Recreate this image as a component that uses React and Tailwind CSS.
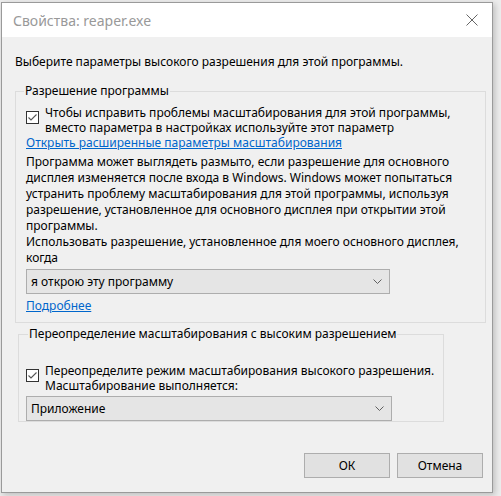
import React from "react";

const Check = () => (
  <svg width="13" height="13" viewBox="0 0 13 13" className="shrink-0 mt-[6px]">
    <rect x="0.5" y="0.5" width="12" height="12" fill="#fff" stroke="#333" />
    <polyline points="2.5,6.5 5,9 10.5,3.5" fill="none" stroke="#555" strokeWidth="1.1" />
  </svg>
);

const Combo = ({ value, width }) => (
  <div
    className={`flex items-center justify-between h-[25px] border border-[#adadad] bg-[#e5e5e5] pl-[4px] pr-[7px] ${width}`}
  >
    <span>{value}</span>
    <svg width="9" height="5" viewBox="0 0 9 5">
      <polyline points="0.5,0.5 4.5,4.5 8.5,0.5" fill="none" stroke="#606060" />
    </svg>
  </div>
);

const Button = ({ children }) => (
  <button className="w-[86px] h-[25px] border border-[#adadad] bg-[#e1e1e1] text-black">
    {children}
  </button>
);

export default function App() {
  return (
    <div
      className="w-[501px] h-[496px] bg-[#ececec] pt-[2px] pl-[1px] overflow-hidden text-[12px] leading-[16px] text-black"
      style={{ fontFamily: '"Noto Sans", "Open Sans", sans-serif' }}
    >
      <div className="w-[492px] h-[491px] border border-[#9a9a9a] flex flex-col bg-[#f0f0f0] shadow-[2px_2px_6px_rgba(0,0,0,0.2)]">
        <div className="h-[34px] bg-white flex items-center justify-between pl-[11px] pr-[14px]">
          <span className="text-[14px] text-[#999] mt-[2px]">Свойства: reaper.exe</span>
          <svg width="12" height="12" viewBox="0 0 12 12">
            <path d="M0.5 0.5 L11.5 11.5 M11.5 0.5 L0.5 11.5" stroke="#666" strokeWidth="1" />
          </svg>
        </div>

        <div className="flex-1 flex flex-col pl-[13px] pr-[7px]">
          <p className="mt-[17px] mb-[13px] whitespace-nowrap">
            Выберите параметры высокого разрешения для этой программы.
          </p>

          <fieldset className="w-[471px] border border-[#dcdcdc] pl-[10px] pr-[8px] pt-[6px] pb-[8px]">
            <legend className="ml-[-2px] px-[1px]">Разрешение программы</legend>
            <div className="flex gap-[6px]">
              <Check />
              <p className="leading-[15px] whitespace-nowrap">
                Чтобы исправить проблемы масштабирования для этой программы,
                <br />
                вместо параметра в настройках используйте этот параметр
              </p>
            </div>
            <a href="#" className="block text-[#0066cc] underline w-fit whitespace-nowrap">
              Открыть расширенные параметры масштабирования
            </a>
            <p className="mt-[3px] whitespace-nowrap">
              Программа может выглядеть размыто, если разрешение для основного
              <br />
              дисплея изменяется после входа в Windows. Windows может попытаться
              <br />
              устранить проблему масштабирования для этой программы, используя
              <br />
              разрешение, установленное для основного дисплея при открытии этой
              <br />
              программы.
              <br />
              Использовать разрешение, установленное для моего основного дисплея,
              <br />
              когда
            </p>
            <div className="mt-[3px]">
              <Combo value="я открою эту программу" width="w-[364px]" />
            </div>
            <a href="#" className="block mt-[4px] text-[#0066cc] underline w-fit">
              Подробнее
            </a>
          </fieldset>

          <fieldset className="ml-[3px] mt-[3px] w-[426px] border border-[#dcdcdc] pl-[7px] pr-[8px] pt-[21px] pb-0">
            <legend className="ml-[2px] px-[1px] whitespace-nowrap">
              Переопределение масштабирования с высоким разрешением
            </legend>
            <div className="flex gap-[6px]">
              <Check />
              <p className="leading-[15px] whitespace-nowrap">
                Переопределите режим масштабирования высокого разрешения.
                <br />
                Масштабирование выполняется:
              </p>
            </div>
            <div className="mt-[3px]">
              <Combo value="Приложение" width="w-[366px]" />
            </div>
          </fieldset>

          <div className="mt-[31px] flex justify-end gap-[7px] pr-[2px]">
            <Button>ОК</Button>
            <Button>Отмена</Button>
          </div>
        </div>
      </div>
    </div>
  );
}
